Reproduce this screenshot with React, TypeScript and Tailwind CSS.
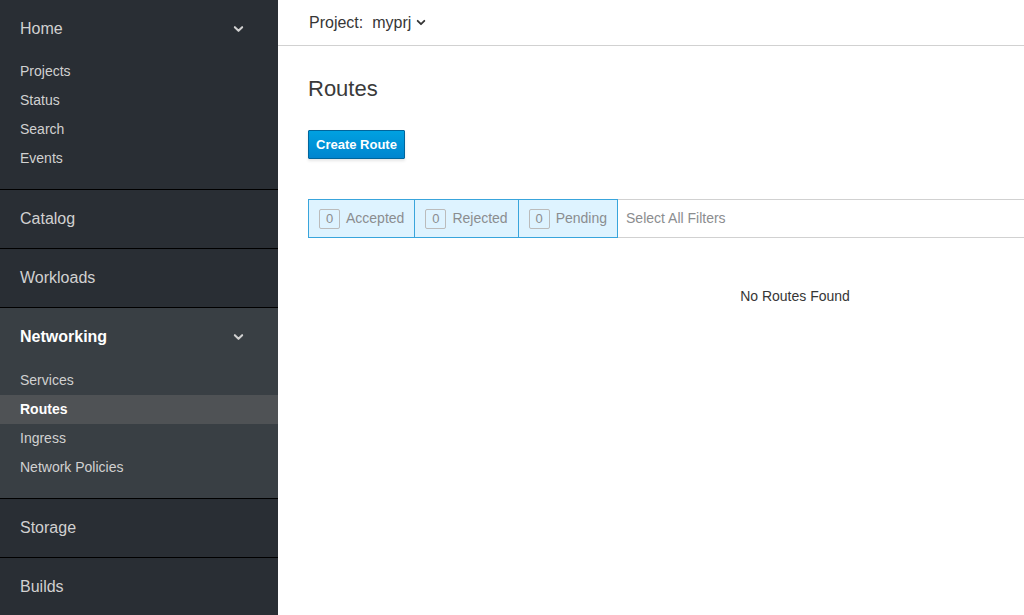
import React from 'react';

const font = { fontFamily: '"Liberation Sans", "Open Sans", sans-serif' };

function Chevron({ className }: { className?: string }) {
  return (
    <svg viewBox="0 0 12 8" className={className} fill="none" stroke="currentColor" strokeWidth="2.2" strokeLinecap="round" strokeLinejoin="round">
      <path d="M2 2l4 4 4-4" />
    </svg>
  );
}

interface NavSection {
  title: string;
  items?: string[];
  active?: string;
}

const sections: NavSection[] = [
  { title: 'Home', items: ['Projects', 'Status', 'Search', 'Events'] },
  { title: 'Catalog' },
  { title: 'Workloads' },
  { title: 'Networking', items: ['Services', 'Routes', 'Ingress', 'Network Policies'], active: 'Routes' },
  { title: 'Storage' },
  { title: 'Builds' },
];

function Sidebar() {
  return (
    <nav className="w-[278px] shrink-0 h-full bg-[#292e34] overflow-hidden">
      {sections.map((s, i) => {
        const isOpen = !!s.active;
        return (
          <div
            key={s.title}
            className={`${i > 0 ? 'border-t border-black' : ''} ${isOpen ? 'bg-[#393f44]' : ''}`}
          >
            <div className={`${i === 0 ? 'h-[57px]' : 'h-[58px]'} pl-5 pr-[34px] flex items-center justify-between`}>
              <span className={`text-[16px] ${isOpen ? 'text-white font-bold' : 'text-[#d1d1d1]'}`}>{s.title}</span>
              {s.items && <Chevron className="w-[11px] h-[8px] text-[#d1d1d1]" />}
            </div>
            {s.items && (
              <ul className="pb-[16px]">
                {s.items.map(item => (
                  <li
                    key={item}
                    className={`h-[29px] pl-5 flex items-center text-[14px] ${
                      item === s.active ? 'bg-[#4f5255] text-white font-bold' : 'text-[#d1d1d1]'
                    }`}
                  >
                    {item}
                  </li>
                ))}
              </ul>
            )}
          </div>
        );
      })}
    </nav>
  );
}

function FilterChip({ label }: { label: string }) {
  return (
    <div className="h-full flex items-center gap-[6px] px-[10px] bg-[#def3ff] border border-[#39a5dc] -ml-px first:ml-0">
      <span className="h-[20px] min-w-[21px] px-[5px] flex items-center justify-center border border-[#bbbbbb] rounded-[2px] text-[13px] text-[#8b8d8f]">0</span>
      <span className="text-[14px] text-[#8b8d8f]">{label}</span>
    </div>
  );
}

export default function App() {
  return (
    <div className="flex w-[1024px] h-[615px] overflow-hidden bg-white" style={font}>
      <Sidebar />
      <main className="flex-1 min-w-0 flex flex-col overflow-hidden">
        <div className="h-[46px] shrink-0 border-b border-[#d1d1d1] pl-[31px] flex items-center gap-[9px] text-[16px] text-[#363636]">
          <span>Project:</span>
          <span className="flex items-center gap-[5px]">
            myprj
            <Chevron className="w-[10px] h-[7px] text-[#363636]" />
          </span>
        </div>
        <div className="pl-[30px] w-[1004px] shrink-0">
          <h1 className="mt-[29px] text-[22px] font-light text-[#3a3a3a] leading-[28px]">Routes</h1>
          <button className="mt-[27px] h-[29px] px-[7px] text-[13px] font-bold text-white rounded-[1px] border border-[#00659c] bg-gradient-to-b from-[#00a1e1] to-[#0085cf] shadow-[0_2px_3px_rgba(3,3,3,0.1)]">
            Create Route
          </button>
          <div className="mt-[40px] h-[39px] flex items-stretch border-y border-[#d1d1d1]">
            <div className="flex -my-px">
              <FilterChip label="Accepted" />
              <FilterChip label="Rejected" />
              <FilterChip label="Pending" />
            </div>
            <div className="flex items-center pl-[8px] text-[14px] text-[#8b8d8f]">Select All Filters</div>
          </div>
          <div className="mt-[48px] text-center text-[14px] text-[#363636]">No Routes Found</div>
        </div>
      </main>
    </div>
  );
}
